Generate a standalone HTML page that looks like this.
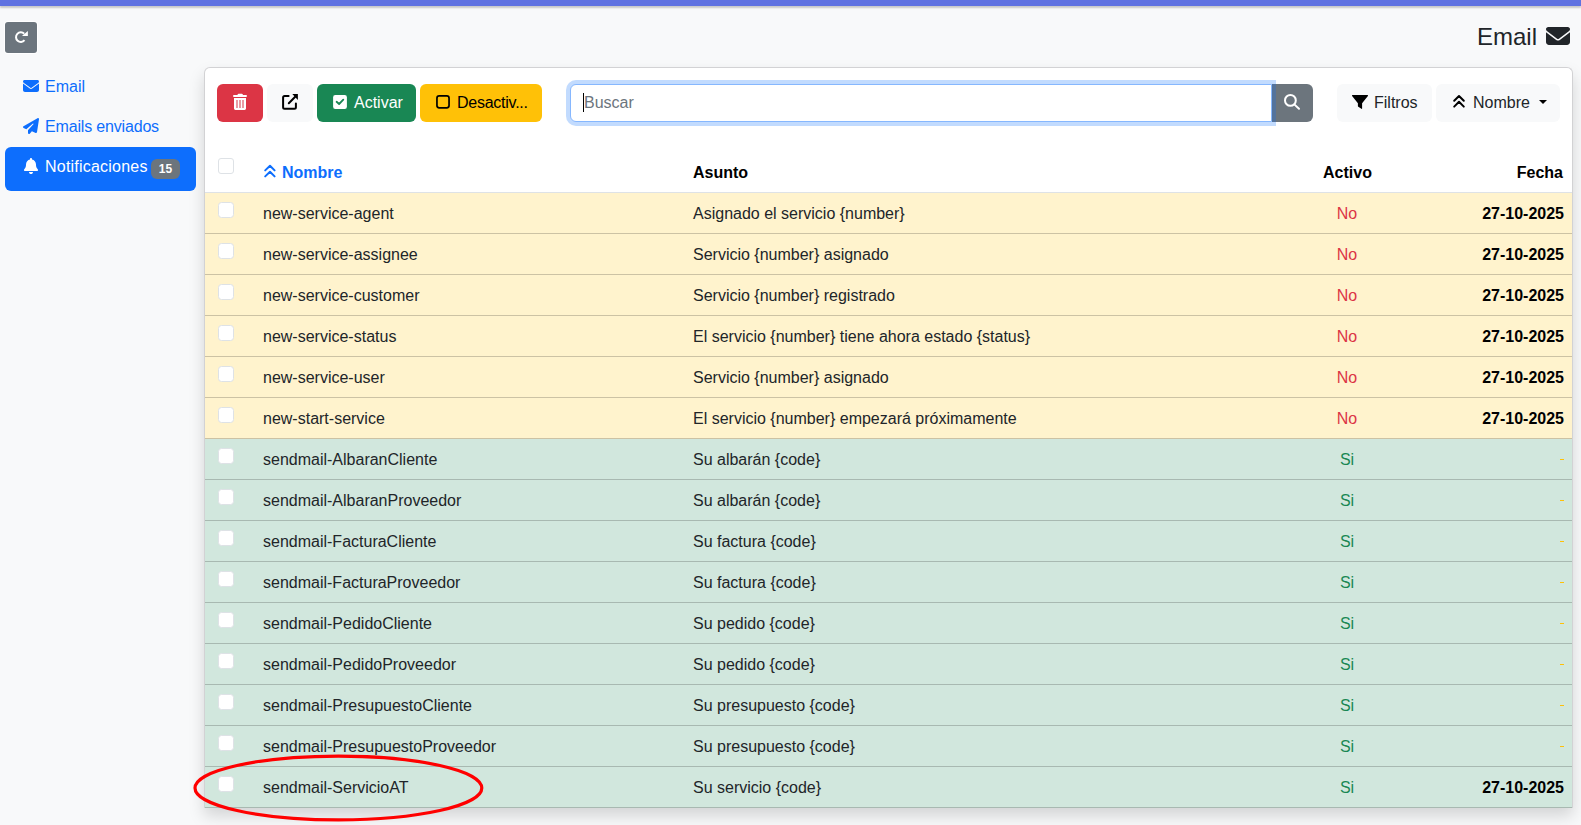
<!DOCTYPE html>
<html><head><meta charset="utf-8">
<style>
*{box-sizing:border-box;margin:0;padding:0}
html,body{width:1581px;height:825px;overflow:hidden;background:#f8f9fa;font-family:"Liberation Sans",sans-serif;color:#212529;font-size:16px;line-height:24px}
.abs{position:absolute}
svg{position:absolute;display:block}
#topbar{left:0;top:0;width:1581px;height:6px;background:#5f72e1;box-shadow:0 2px 2px rgba(0,0,0,.2)}
#refresh{left:5px;top:22px;width:32px;height:31px;background:#6c757d;border-radius:3px;box-shadow:0 0 0 1px #fff}
#title{left:1477px;top:23px;font-size:24px;color:#212529;line-height:28px;white-space:nowrap}
.nl{position:absolute;color:#0d6efd;white-space:nowrap}
#active{left:5px;top:147px;width:191px;height:44px;background:#0d6efd;border-radius:6px}
.badge{position:absolute;background:#6c757d;color:#fff;font-weight:bold;font-size:12px;border-radius:6px;text-align:center}
#card{left:204px;top:67px;width:1369px;height:741px;background:#fff;border:1px solid #d2d2d4;border-bottom:0;border-radius:6px 6px 0 0;box-shadow:0 8px 16px rgba(0,0,0,.15)}
.btn{position:absolute;top:84px;height:38px;border-radius:6px;white-space:nowrap}
.btxt{position:absolute;white-space:nowrap}
.row{position:absolute;left:205px;width:1367px;height:41px}
.row.w{background:#fff3cd;border-bottom:1px solid #ccc2a4}
.row.s{background:#d1e7dd;border-bottom:1px solid #a8b9b1}
.row>div{position:absolute;top:9px;white-space:nowrap}
.row .cb{left:13px;top:9px;width:16px;height:16px;border:1px solid #dee2e6;border-radius:3.5px;background:#fff}
.row .n{left:58px}
.row .a{left:488px}
.row .act{left:1092px;width:100px;text-align:center}
.row .f{right:8px;font-weight:bold;color:#000}
.no{color:#dc3545}.si{color:#198754}.row .f.dash{color:#ffc107;font-weight:normal}
.th{position:absolute;top:161px;font-weight:bold;white-space:nowrap;color:#000}
</style></head><body>
<div id="card" class="abs"></div>
<div id="topbar" class="abs"></div>
<div id="refresh" class="abs"></div>
<svg style="left:5px;top:22px" width="32" height="31" viewBox="0 0 32 31"><path d="M19.5 18.2 A4.8 4.8 0 1 1 19.2 11.7" fill="none" stroke="#fff" stroke-width="2"/><path d="M16.9 14.1 L22.9 14.1 L22.9 8.9 Z" fill="#fff"/></svg>
<div id="title" class="abs">Email</div>
<svg style="left:1546px;top:27px" width="24" height="18" viewBox="0 64 512 384"><path fill="#212529" d="M48 64C21.5 64 0 85.5 0 112c0 15.1 7.1 29.3 19.2 38.4L236.8 313.6c11.4 8.5 27 8.5 38.4 0L492.8 150.4c12.1-9.1 19.2-23.3 19.2-38.4c0-26.5-21.5-48-48-48H48zM0 176V384c0 35.3 28.7 64 64 64H448c35.3 0 64-28.7 64-64V176L294.4 339.2c-22.800 17.1-54 17.1-76.8 0L0 176z"/></svg>

<svg style="left:23px;top:80px" width="16" height="12" viewBox="0 64 512 384"><path fill="#0d6efd" d="M48 64C21.5 64 0 85.5 0 112c0 15.1 7.1 29.3 19.2 38.4L236.8 313.6c11.4 8.5 27 8.5 38.4 0L492.8 150.4c12.1-9.1 19.2-23.3 19.2-38.4c0-26.5-21.5-48-48-48H48zM0 176V384c0 35.3 28.7 64 64 64H448c35.3 0 64-28.7 64-64V176L294.4 339.2c-22.8 17.1-54 17.1-76.8 0L0 176z"/></svg>
<div class="nl" style="left:45px;top:75px">Email</div>
<svg style="left:23px;top:118px" width="16" height="16" viewBox="0 0 512 512"><path fill="#0d6efd" d="M498.1 5.6c10.1 7 15.4 19.1 13.5 31.2l-64 416c-1.5 9.7-7.4 18.2-16 23s-18.9 5.4-28 1.6L284 427.7l-68.5 74.1c-8.9 9.7-22.9 12.9-35.2 8.1S160 493.2 160 480V396.4c0-4 1.5-7.8 4.2-10.7L331.8 202.8c5.8-6.3 5.600-16-.4-22s-15.7-6.4-22-.7L106 360.8 17.7 316.6C7.1 311.300 .3 300.7 0 288.9s5.9-22.8 16.1-28.7l448-256c10.7-6.1 23.9-5.5 34 1.4z"/></svg>
<div class="nl" style="left:45px;top:115px;letter-spacing:-0.17px">Emails enviados</div>
<div id="active" class="abs"></div>
<svg style="left:24px;top:158px" width="14" height="16" viewBox="0 0 448 512"><path fill="#fff" d="M224 0c-17.7 0-32 14.3-32 32V51.2C119 66 64 130.6 64 208v18.8c0 47-17.3 92.4-48.5 127.6l-7.4 8.3c-8.4 9.4-10.4 22.9-5.3 34.4S19.4 416 32 416H416c12.6 0 24-7.4 29.2-18.9s3.100-25-5.3-34.4l-7.4-8.3C401.3 319.2 384 273.9 384 226.8V208c0-77.4-55-142-128-156.8V32c0-17.7-14.3-32-32-32zm45.3 493.3c12-12 18.7-28.3 18.7-45.3H224 160c0 17 6.7 33.3 18.7 45.3s28.3 18.7 45.3 18.7s33.3-6.7 45.3-18.7z"/></svg>
<div class="nl" style="left:45px;top:155px;color:#fff;letter-spacing:0.22px">Notificaciones</div>
<div class="badge" style="left:151px;top:159px;width:29px;height:20px;line-height:20px">15</div>

<div class="btn" style="left:217px;width:46px;background:#dc3545"></div>
<svg style="left:233px;top:93px" width="14" height="18" viewBox="233 93 14 18"><path fill="#fff" d="M237.6 94.6 Q237.9 93.8 238.6 93.8 H241.8 Q242.5 93.8 242.8 94.6 L243 95 H246 Q247 95 247 95.9 V96.1 Q247 97 246 97 H234 Q233 97 233 96.1 V95.9 Q233 95 234 95 H237.4 Z M234 98 H246 V108.6 Q246 110 244.6 110 H235.4 Q234 110 234 108.6 Z"/><rect x="236.1" y="100" width="1.8" height="8" fill="#e8909a"/><rect x="239.1" y="100" width="1.8" height="8" fill="#e8909a"/><rect x="242.1" y="100" width="1.8" height="8" fill="#e8909a"/></svg>
<div class="btn" style="left:267px;width:46px;background:#f8f9fa"></div>
<svg style="left:280px;top:92px" width="20" height="20" viewBox="280 92 20 20"><path d="M288.6 96 H284.6 Q283.1 96 283.1 97.5 V107.3 Q283.1 108.8 284.6 108.8 H294.4 Q295.9 108.8 295.9 107.3 V103.5" fill="none" stroke="#000" stroke-width="2" stroke-linecap="round"/><path d="M288.8 103.2 L295.2 96.8" stroke="#000" stroke-width="2" stroke-linecap="round"/><path d="M292.3 94.1 H297.9 V99.9 Z" fill="#000"/></svg>
<div class="btn" style="left:317px;width:99px;background:#198754"></div>
<svg style="left:333px;top:95px" width="14" height="14" viewBox="333 95 14 14"><rect x="333.1" y="95.1" width="13.8" height="13.8" rx="2.2" fill="#fff"/><path d="M336.6 101.8 L339.1 104 L343.3 99.7" fill="none" stroke="#198754" stroke-width="1.8" stroke-linecap="round" stroke-linejoin="round"/></svg>
<div class="btxt" style="left:354px;top:91px;color:#fff">Activar</div>
<div class="btn" style="left:420px;width:122px;background:#ffc107"></div>
<svg style="left:435px;top:94px" width="16" height="16" viewBox="435 94 16 16"><rect x="436.95" y="95.95" width="12.1" height="11.9" rx="2.3" fill="none" stroke="#000" stroke-width="1.7"/></svg>
<div class="btxt" style="left:457px;top:91px;color:#000;letter-spacing:-0.25px">Desactiv...</div>

<div class="btn" style="left:1272px;width:41px;background:#6c757d;border-radius:0 6px 6px 0"></div>
<div class="abs" style="left:566px;top:80px;width:710px;height:46px;border-radius:10px 0 0 10px;background:rgba(13,110,253,.25)"></div>
<div class="abs" style="left:570px;top:84px;width:702px;height:38px;border-radius:6px 0 0 6px;background:#fff;border:1px solid #86b7fe"></div>
<div class="btxt" style="left:584px;top:91px;color:#6c757d">Buscar</div>
<div class="abs" style="left:583px;top:93px;width:1px;height:19px;background:#000"></div>
<svg style="left:1282px;top:92px" width="20" height="20" viewBox="1282 92 20 20"><circle cx="1290.4" cy="100.4" r="5.4" fill="none" stroke="#fff" stroke-width="2"/><path d="M1294.6 104.6 L1299 108.8" stroke="#fff" stroke-width="2" stroke-linecap="round"/></svg>

<div class="btn" style="left:1337px;width:95px;background:#f8f9fa"></div>
<svg style="left:1350px;top:93px" width="20" height="18" viewBox="1350 93 20 18"><path d="M1352.6 95 H1367.4 Q1368.4 95 1367.9 95.9 L1362.1 103.3 V108.5 Q1362.1 109.2 1361.4 108.8 L1358.3 106.8 Q1357.9 106.5 1357.9 106 V103.3 L1352.1 95.9 Q1351.6 95 1352.6 95 Z" fill="#000"/></svg>
<div class="btxt" style="left:1374px;top:91px">Filtros</div>
<div class="btn" style="left:1436px;width:124px;background:#f8f9fa"></div>
<svg style="left:1450px;top:92px" width="18" height="18" viewBox="1450 92 18 18"><path d="M1454.2 100.8 L1459 96 L1463.8 100.8 M1454.2 106.6 L1459 101.8 L1463.8 106.6" fill="none" stroke="#000" stroke-width="2" stroke-linecap="round" stroke-linejoin="round"/></svg>
<div class="btxt" style="left:1473px;top:91px">Nombre</div>
<svg style="left:1537px;top:98px" width="12" height="8" viewBox="1537 98 12 8"><path d="M1539 100 H1547 L1543 104 Z" fill="#000"/></svg>

<div class="abs" style="left:218px;top:158px;width:16px;height:16px;border:1px solid #dee2e6;border-radius:3px;background:#fff"></div>
<svg style="left:262px;top:163px" width="16" height="16" viewBox="262 163 16 16"><path d="M265.2 170.4 L270 165.8 L274.6 170.4 M265.2 176.4 L270 171.8 L274.6 176.4" fill="none" stroke="#0d6efd" stroke-width="2" stroke-linecap="round" stroke-linejoin="round"/></svg>
<div class="th" style="left:282px;color:#0d6efd">Nombre</div>
<div class="th" style="left:693px">Asunto</div>
<div class="th" style="left:1323px">Activo</div>
<div class="th" style="left:1464px;width:99px;text-align:right">Fecha</div>
<div class="abs" style="left:205px;top:192px;width:1367px;height:1px;background:#dee2e6"></div>
<div class="row w" style="top:193px"><div class="cb"></div><div class="n">new-service-agent</div><div class="a">Asignado el servicio {number}</div><div class="act no">No</div><div class="f">27-10-2025</div></div>
<div class="row w" style="top:234px"><div class="cb"></div><div class="n">new-service-assignee</div><div class="a">Servicio {number} asignado</div><div class="act no">No</div><div class="f">27-10-2025</div></div>
<div class="row w" style="top:275px"><div class="cb"></div><div class="n">new-service-customer</div><div class="a">Servicio {number} registrado</div><div class="act no">No</div><div class="f">27-10-2025</div></div>
<div class="row w" style="top:316px"><div class="cb"></div><div class="n">new-service-status</div><div class="a">El servicio {number} tiene ahora estado {status}</div><div class="act no">No</div><div class="f">27-10-2025</div></div>
<div class="row w" style="top:357px"><div class="cb"></div><div class="n">new-service-user</div><div class="a">Servicio {number} asignado</div><div class="act no">No</div><div class="f">27-10-2025</div></div>
<div class="row w" style="top:398px"><div class="cb"></div><div class="n">new-start-service</div><div class="a">El servicio {number} empezará próximamente</div><div class="act no">No</div><div class="f">27-10-2025</div></div>
<div class="row s" style="top:439px"><div class="cb"></div><div class="n">sendmail-AlbaranCliente</div><div class="a">Su albarán {code}</div><div class="act si">Si</div><div class="dash" style="left:1354.5px;top:20px;width:4.4px;height:1.4px;background:#ffc107"></div></div>
<div class="row s" style="top:480px"><div class="cb"></div><div class="n">sendmail-AlbaranProveedor</div><div class="a">Su albarán {code}</div><div class="act si">Si</div><div class="dash" style="left:1354.5px;top:20px;width:4.4px;height:1.4px;background:#ffc107"></div></div>
<div class="row s" style="top:521px"><div class="cb"></div><div class="n">sendmail-FacturaCliente</div><div class="a">Su factura {code}</div><div class="act si">Si</div><div class="dash" style="left:1354.5px;top:20px;width:4.4px;height:1.4px;background:#ffc107"></div></div>
<div class="row s" style="top:562px"><div class="cb"></div><div class="n">sendmail-FacturaProveedor</div><div class="a">Su factura {code}</div><div class="act si">Si</div><div class="dash" style="left:1354.5px;top:20px;width:4.4px;height:1.4px;background:#ffc107"></div></div>
<div class="row s" style="top:603px"><div class="cb"></div><div class="n">sendmail-PedidoCliente</div><div class="a">Su pedido {code}</div><div class="act si">Si</div><div class="dash" style="left:1354.5px;top:20px;width:4.4px;height:1.4px;background:#ffc107"></div></div>
<div class="row s" style="top:644px"><div class="cb"></div><div class="n">sendmail-PedidoProveedor</div><div class="a">Su pedido {code}</div><div class="act si">Si</div><div class="dash" style="left:1354.5px;top:20px;width:4.4px;height:1.4px;background:#ffc107"></div></div>
<div class="row s" style="top:685px"><div class="cb"></div><div class="n">sendmail-PresupuestoCliente</div><div class="a">Su presupuesto {code}</div><div class="act si">Si</div><div class="dash" style="left:1354.5px;top:20px;width:4.4px;height:1.4px;background:#ffc107"></div></div>
<div class="row s" style="top:726px"><div class="cb"></div><div class="n">sendmail-PresupuestoProveedor</div><div class="a">Su presupuesto {code}</div><div class="act si">Si</div><div class="dash" style="left:1354.5px;top:20px;width:4.4px;height:1.4px;background:#ffc107"></div></div>
<div class="row s" style="top:767px"><div class="cb"></div><div class="n">sendmail-ServicioAT</div><div class="a">Su servicio {code}</div><div class="act si">Si</div><div class="f">27-10-2025</div></div>
<svg style="left:0;top:0" width="1581" height="825"><ellipse cx="338.4" cy="788" rx="143.4" ry="31.9" fill="none" stroke="#ff0000" stroke-width="3.2"/></svg>
</body></html>
